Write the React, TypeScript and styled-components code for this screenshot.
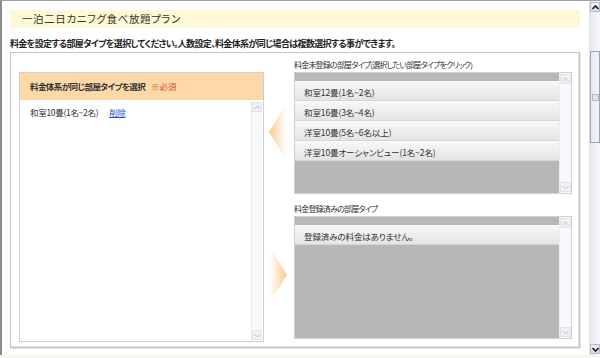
import React from 'react'
import styled, { createGlobalStyle } from 'styled-components'

const GlobalStyle = createGlobalStyle`
  html, body { margin: 0; padding: 0; background: #fff; overflow: hidden; }
  body {
    font-family: "Noto Sans CJK JP", "Liberation Sans", sans-serif;
    color: #333;
    font-feature-settings: "palt";
  }
`

const unregistered = [
  '和室12畳(1名~2名)',
  '和室16畳(3名~4名)',
  '洋室10畳(5名~6名以上)',
  '洋室10畳オーシャンビュー(1名~2名)',
]

const Chevron = ({ up, dark }: { up?: boolean; dark?: boolean }) => (
  <svg width="7" height="5" viewBox="0 0 7 5">
    <path
      d={up ? 'M0.5 4 L3.5 1 L6.5 4' : 'M0.5 1 L3.5 4 L6.5 1'}
      fill="none"
      stroke={dark ? '#222' : '#b8bcc8'}
      strokeWidth={dark ? 1.6 : 1}
    />
  </svg>
)

const App = () => {
  return (
    <>
      <GlobalStyle />
      <Window>
        <Content>
          <Title>一泊二日カニフグ食べ放題プラン</Title>
          <Lead>料金を設定する部屋タイプを選択してください。人数設定、料金体系が同じ場合は複数選択する事ができます。</Lead>
          <Frame>
            <LeftPanel>
              <PanelHead>
                料金体系が同じ部屋タイプを選択<Required>※必須</Required>
              </PanelHead>
              <PanelBody>
                <Selected>
                  <span>和室10畳(1名~2名)</span>
                  <DeleteLink>削除</DeleteLink>
                </Selected>
                <MiniScroll>
                  <MiniBtn><Chevron up /></MiniBtn>
                  <MiniBtn><Chevron /></MiniBtn>
                </MiniScroll>
              </PanelBody>
            </LeftPanel>
            <ArrowCol>
              <Arrow dir="left" />
              <Arrow dir="right" />
            </ArrowCol>
            <RightCol>
              <Label>料金未登録の部屋タイプ(選択したい部屋タイプをクリック)</Label>
              <ListBox h={122}>
                <ListInner>
                  {unregistered.map((r) => (
                    <Item key={r}>{r}</Item>
                  ))}
                </ListInner>
                <BoxScroll>
                  <MiniBtn><Chevron up /></MiniBtn>
                  <MiniBtn><Chevron /></MiniBtn>
                </BoxScroll>
              </ListBox>
              <Label second>料金登録済みの部屋タイプ</Label>
              <ListBox h={123}>
                <ListInner>
                  <Item>登録済みの料金はありません。</Item>
                </ListInner>
                <BoxScroll>
                  <MiniBtn><Chevron up /></MiniBtn>
                  <MiniBtn><Chevron /></MiniBtn>
                </BoxScroll>
              </ListBox>
            </RightCol>
          </Frame>
        </Content>
        <PageScroll>
          <PageBtn><Chevron up dark /></PageBtn>
          <Thumb><Grip /></Thumb>
          <PageBtn><Chevron dark /></PageBtn>
        </PageScroll>
      </Window>
      <Footer />
    </>
  )
}

export default App

const Window = styled.div`
  width: 598px;
  height: 354px;
  border-left: 2px solid #8c8c8c;
  border-top: 1px solid #a0a0a0;
  display: flex;
  box-sizing: content-box;
`
const Content = styled.div`
  flex: 1;
  padding: 9px 9px 0 8px;
`
const Title = styled.div`
  height: 18px;
  line-height: 18px;
  background: #fdf8d5;
  padding-left: 12px;
  font-size: 10.5px;
  color: #333;
  letter-spacing: 0.6px;
`
const Lead = styled.div`
  margin-top: 9px;
  font-size: 9px;
  font-weight: bold;
  line-height: 14px;
  color: #222;
  letter-spacing: -0.65px;
  white-space: nowrap;
`
const Frame = styled.div`
  margin-top: 1px;
  height: 296px;
  box-sizing: border-box;
  border: 1px solid #c4c4c4;
  box-shadow: inset -1px -1px 0 #e2e2e2, 1px 1px 0 #e6e6e6;
  display: flex;
  padding: 5px 7px 5px 8px;
`
const LeftPanel = styled.div`
  margin-top: 14px;
  width: 243px;
  border: 1px solid #cfcfcf;
  display: flex;
  flex-direction: column;
`
const PanelHead = styled.div`
  height: 27px;
  line-height: 27px;
  background: #fdd9a9;
  padding-left: 10px;
  font-size: 8.5px;
  font-weight: bold;
  color: #333;
  letter-spacing: -0.6px;
`
const Required = styled.span`
  color: #d9502a;
  font-weight: normal;
  margin-left: 6px;
  letter-spacing: 0;
`
const PanelBody = styled.div`
  flex: 1;
  display: flex;
`
const Selected = styled.div`
  flex: 1;
  padding: 5px 0 0 10px;
  font-size: 8.5px;
  color: #333;
  display: flex;
  gap: 11px;
  align-items: flex-start;
  height: 14px;
  line-height: 14px;
  letter-spacing: -0.3px;
`
const DeleteLink = styled.a`
  color: #1b56c6;
  text-decoration: underline;
  cursor: pointer;
`
const MiniScroll = styled.div`
  width: 10px;
  margin: 2px 1px 1px 0;
  background: #f8f9fc;
  border-left: 1px solid #e8e8ee;
  display: flex;
  flex-direction: column;
  justify-content: space-between;
`
const MiniBtn = styled.div`
  height: 10px;
  display: flex;
  align-items: center;
  justify-content: center;
  background: #f1f2f5;
  border: 1px solid #e2e4ea;
  box-sizing: border-box;
`
const ArrowCol = styled.div`
  width: 30px;
  display: flex;
  flex-direction: column;
  align-items: center;
  padding-top: 47px;
`
const Arrow = styled.div<{ dir: 'left' | 'right' }>`
  width: 17px;
  height: 54px;
  margin-left: ${(p) => (p.dir === 'left' ? '-3px' : '-1px')};
  margin-top: ${(p) => (p.dir === 'left' ? '0' : '89px')};
  clip-path: ${(p) =>
    p.dir === 'left' ? 'polygon(0 50%, 100% 0, 100% 100%)' : 'polygon(0 0, 100% 50%, 0 100%)'};
  background: ${(p) =>
    p.dir === 'left'
      ? 'linear-gradient(to right, #fdc98c, #fff)'
      : 'linear-gradient(to right, #fff, #fec88a)'};
`
const RightCol = styled.div`
  width: 278px;
  display: flex;
  flex-direction: column;
`
const Label = styled.div<{ second?: boolean }>`
  height: 14px;
  line-height: 13px;
  margin-top: ${(p) => (p.second ? '8px' : '0')};
  font-size: 8px;
  color: #333;
  letter-spacing: -0.8px;
`
const ListBox = styled.div<{ h: number }>`
  height: ${(p) => p.h}px;
  border: 1px solid #d0d0d0;
  box-sizing: border-box;
  display: flex;
  background: #b7b7b7;
`
const ListInner = styled.div`
  flex: 1;
  padding-top: 8px;
`
const Item = styled.div`
  height: 20px;
  line-height: 20px;
  padding-left: 9px;
  font-size: 8.5px;
  color: #333;
  background: linear-gradient(#f7f7f7, #e4e4e4);
  border-top: 1px solid #fafafa;
  border-bottom: 1px solid #d6d6d6;
  box-sizing: border-box;
  letter-spacing: -0.1px;
`
const BoxScroll = styled.div`
  width: 11px;
  background: #f8f9fc;
  border-left: 1px solid #ececf0;
  display: flex;
  flex-direction: column;
  justify-content: space-between;
  padding: 1px 0;
`
const PageScroll = styled.div`
  width: 11px;
  background: linear-gradient(to right, #e9eaf2, #f7f8fc);
  border-left: 1px solid #e0e0ea;
  display: flex;
  flex-direction: column;
  padding: 1px 0;
`
const PageBtn = styled.div`
  height: 10px;
  display: flex;
  align-items: center;
  justify-content: center;
  background: linear-gradient(#f4f4f8, #d8dae4);
  border: 1px solid #b9bccb;
  box-sizing: border-box;
  &:last-child { margin-top: auto; }
`
const Thumb = styled.div`
  margin-top: 39px;
  height: 92px;
  background: linear-gradient(to right, #e6e8f2, #f4f5fa);
  border: 1px solid #9ea2b8;
  box-sizing: border-box;
  display: flex;
  align-items: center;
  justify-content: center;
`
const Grip = styled.div`
  width: 5px;
  height: 5px;
  border: 1px solid #b4b8cc;
  background: #dfe1ea;
`
const Footer = styled.div`
  height: 4px;
  background: #f7f6ee;
`
